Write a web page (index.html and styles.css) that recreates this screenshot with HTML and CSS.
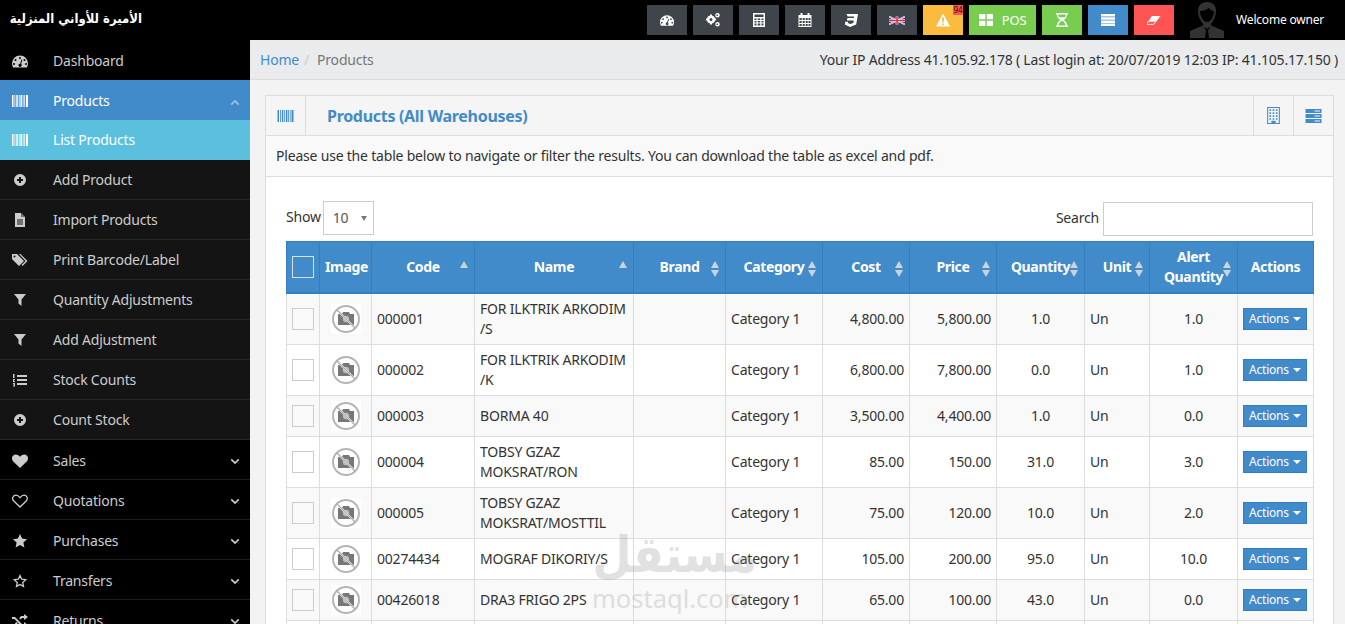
FILE: index.html
```html
<!DOCTYPE html>
<html lang="en">
<head>
<meta charset="utf-8">
<title>Products</title>
<link rel="stylesheet" href="styles.css">
</head>
<body>
<svg class="sprite" xmlns="http://www.w3.org/2000/svg">
  <symbol id="i-barcode" viewBox="0 0 16 14"><path d="M0 1h1.500v12H0zM2.500 1h.8v12h-.8zM4.300 1h1.500v12H4.300zM6.800 1h.8v12h-.8zM8.400 1h1.500v12H8.400zM10.700 1h.8v12h-.8zM12.300 1h.8v12h-.8zM14 1h2v12h-2z"/></symbol>
  <symbol id="i-dash" viewBox="0 0 16 14"><path fill-rule="evenodd" d="M8 1.500A8 8 0 0 0 0 9.500c0 1.500.4 2.800 1.100 4h13.800c.7-1.200 1.100-2.500 1.100-4a8 8 0 0 0-8-8zM8 3a1 1 0 1 1 0 2 1 1 0 0 1 0-2zM3.500 5a1 1 0 1 1 0 2 1 1 0 0 1 0-2zM12.500 5a1 1 0 1 1 0 2 1 1 0 0 1 0-2zM2 9a1 1 0 1 1 0 2 1 1 0 0 1 0-2zM14 9a1 1 0 1 1 0 2 1 1 0 0 1 0-2zM9.500 5.500l.9.3-1.300 4.200a1.600 1.600 0 1 1-.9-.3z"/></symbol>
  <symbol id="i-plus" viewBox="0 0 14 14"><path fill-rule="evenodd" d="M7 1a6 6 0 1 1 0 12A6 6 0 0 1 7 1zM6 4v2H4v2h2v2h2V8h2V6H8V4z"/></symbol>
  <symbol id="i-file" viewBox="1 0 12 14"><path fill-rule="evenodd" d="M2 0h6l4 4v10H2zM4 6.500v1h6v-1zM4 8.500v1h6v-1zM4 10.500v1h6v-1z"/><path fill="#141414" d="M8 0v4h4z" opacity=".5"/></symbol>
  <symbol id="i-tags" viewBox="0 0 16 14"><path fill-rule="evenodd" d="M0 1h5l7 7-5 5-7-7zM2.500 2.500a1 1 0 1 0 0 2 1 1 0 0 0 0-2z"/><path d="M7 1h1.500l7 7-5 5-1-1 4-4z"/></symbol>
  <symbol id="i-filter" viewBox="0 0 12 14"><path d="M0 1h12L7.500 6.500V13l-3-2.500v-4z"/></symbol>
  <symbol id="i-listol" viewBox="0 0 14 14"><path d="M4 2h10v2H4zM4 6h10v2H4zM4 10h10v2H4zM0 1h1.500v4H0zM0 6h2v1H1v1h1v1H0zM0 10h2v3.500H0v-1h1v-.5H0v-.5h1V11H0z"/></symbol>
  <symbol id="i-heart" viewBox="0 0 16 14"><path d="M8 14 1.300 7.500C-.5 5.700-.4 3 1.200 1.500 3 0 5.800.2 8 2.700 10.200.2 13 0 14.800 1.500c1.600 1.500 1.700 4.200-.1 6z"/></symbol>
  <symbol id="i-hearto" viewBox="0 0 16 14"><path fill="none" stroke="currentColor" stroke-width="1.300" d="M8 13 1.800 7C.3 5.500.4 3.400 1.700 2.100 3.200.9 5.800 1 8 3.600 10.200 1 12.800.9 14.300 2.100c1.300 1.300 1.400 3.400-.1 4.900z"/></symbol>
  <symbol id="i-star" viewBox="0 0 14 14"><path d="m7 0 2.100 4.600 4.900.6-3.600 3.300 1 4.900L7 11l-4.400 2.400 1-4.900L0 5.200l4.900-.6z"/></symbol>
  <symbol id="i-staro" viewBox="0 0 14 14"><path fill="none" stroke="currentColor" stroke-width="1.300" d="m7 1.500 1.700 3.700 4 .5-3 2.700.8 4L7 10.500l-3.500 1.900.8-4-3-2.700 4-.5z"/></symbol>
  <symbol id="i-random" viewBox="0 0 16 14"><path d="M0 3h3l7 7h2V8l4 3-4 3v-2H9L2.500 5H0zM0 10h2.500l2-2 1.300 1.300L3 12H0zM9 2h3V0l4 3-4 3V4h-2L8.500 5.500 7.200 4.200z"/></symbol>
  <symbol id="i-down" viewBox="0 0 12 8"><path fill="none" stroke="currentColor" stroke-width="2" d="m1.500 1.500 4.500 4.500 4.500-4.500"/></symbol>
  <symbol id="i-up" viewBox="0 0 12 8"><path fill="none" stroke="currentColor" stroke-width="2" d="m1.500 6.500 4.500-4.500 4.500 4.500"/></symbol>
  <symbol id="i-cogs" viewBox="0 0 14 14"><path fill-rule="evenodd" d="M5 2.500a4 4 0 1 1 0 8 4 4 0 0 1 0-8zM5 5a1.500 1.500 0 1 0 0 3 1.500 1.500 0 0 0 0-3z"/><path d="M4 1.500h2v2H4zM4 9.500h2v2H4zM0 5.500h2v2H0zM8 5.500h2v2H8z"/><path fill-rule="evenodd" d="M11.500 0a2.200 2.200 0 1 1 0 4.500 2.200 2.200 0 0 1 0-4.500zM11.500 1.500a.8.8 0 1 0 0 1.500.8.8 0 0 0 0-1.500zM11.500 9a2.200 2.200 0 1 1 0 4.500 2.200 2.200 0 0 1 0-4.500zM11.500 10.500a.8.8 0 1 0 0 1.500.8.8 0 0 0 0-1.500z"/></symbol>
  <symbol id="i-calc" viewBox="0 0 12 14"><path fill-rule="evenodd" d="M0 0h12v14H0zM1.500 1.500v2.500h9V1.500zM1.500 5.500v1.500h2V5.500zM4.700 5.500v1.500h2.600V5.500zM8.500 5.500v1.500h2V5.500zM1.500 8v1.500h2V8zM4.700 8v1.500h2.600V8zM8.500 8v1.500h2V8zM1.500 10.500V12.500h2V10.500zM4.700 10.500V12.500h2.600V10.500zM8.500 10.500V12.500h2V10.500z"/></symbol>
  <symbol id="i-cal" viewBox="0 0 13 14"><path fill-rule="evenodd" d="M0 2h2V0h2v2h5V0h2v2h2v12H0zM1 5v2h2.200V5zM4.200 5v2h2V5zM7.200 5v2h2V5zM10 5v2h2V5zM1 8v2h2.200V8zM4.200 8v2h2V8zM7.200 8v2h2V8zM10 8v2h2V8zM1 11v2h2.200v-2zM4.200 11v2h2v-2zM7.200 11v2h2v-2zM10 11v2h2v-2z"/></symbol>
  <symbol id="i-css" viewBox="0 0 14 14"><path d="M2.500 1H14l-1.800 10.500L6 14 .8 11.500l.5-2.700h2.800l-.3 1.300 2.500 1 3-1 .5-2.500H2.900l.5-2.700h6.400l.3-1.400H3.700z"/></symbol>
  <symbol id="i-warn" viewBox="0 0 14 13"><path fill-rule="evenodd" d="M7 0l7 13H0zM6 4l.3 5h1.400L8 4zM6.200 10v1.700h1.600V10z"/></symbol>
  <symbol id="i-th" viewBox="0 0 14 12"><path d="M0 0h6.300v5.300H0zM7.700 0H14v5.300H7.700zM0 6.700h6.300V12H0zM7.700 6.700H14V12H7.700z"/></symbol>
  <symbol id="i-hour" viewBox="0 0 12 14"><path fill-rule="evenodd" d="M0 0h12v1.500h-1c0 2.700-1.500 4.300-3.200 5.500C9.500 8.200 11 9.800 11 12.500h1V14H0v-1.500h1C1 9.800 2.500 8.200 4.200 7 2.500 5.800 1 4.200 1 1.500H0zM2.200 1.500c0 1.200.3 2 .7 2.700h6.200c.4-.7.7-1.500.7-2.700zM6 7.800c-1.700 1-3.500 2.500-3.800 4.700h7.600C9.500 10.300 7.700 8.800 6 7.800z"/></symbol>
  <symbol id="i-list" viewBox="0 0 14 12"><path d="M0 0h14v2.500H0zM0 3.200h14v2.500H0zM0 6.400h14v2.500H0zM0 9.600h14V12H0z"/></symbol>
  <symbol id="i-eraser" viewBox="0 0 16 12"><path d="M5.500 1.500H15.500L11 7H2z"/><path fill="none" stroke="currentColor" stroke-width="1" d="M1.500 7.500h9l-3 3.500h-8z"/></symbol>
  <symbol id="i-build" viewBox="0 0 12 16"><path fill-rule="evenodd" d="M0 0h12v16H0zM1 1v14h3v-2h4v2h3V1zM2.200 2.200h1.500v1.500H2.200zM5.200 2.200h1.500v1.500H5.200zM8.200 2.200h1.500v1.500H8.200zM2.200 5h1.500v1.500H2.200zM5.200 5h1.500v1.500H5.200zM8.200 5h1.500v1.500H8.200zM2.200 7.800h1.500v1.500H2.200zM5.200 7.800h1.500v1.500H5.200zM8.200 7.800h1.500v1.500H8.200zM2.200 10.500h1.500V12H2.200zM5.200 10.500h1.500V12H5.200zM8.200 10.500h1.500V12H8.200z"/></symbol>
  <symbol id="i-server" viewBox="0 0 16 14"><path fill-rule="evenodd" d="M0 0h16v4H0zM9 1.500v1h5.500v-1zM0 5h16v4H0zM9 6.500v1h5.500v-1zM0 10h16v4H0zM9 11.500v1h5.500v-1z"/></symbol>
  <symbol id="i-noimg" viewBox="0 0 30 30"><rect width="30" height="30" fill="#fff"/><circle cx="15" cy="15" r="13" fill="none" stroke="#b5b5b5" stroke-width="2"/><path fill="#777" d="M7 10h4l1-2h6l1 2h4v11H7z"/><circle cx="15" cy="15" r="3.200" fill="#bbb"/><path stroke="#fff" stroke-width="2" d="m7 7 16 16"/><path stroke="#aaa" stroke-width="1.200" d="m6 6 18 18"/></symbol>
</svg>

<header class="topbar">
  <div class="brand" dir="rtl">الأميرة للأواني المنزلية</div>
  <nav class="tools">
    <a class="tool tool-dark"><svg class="ti"><use href="#i-dash"/></svg></a>
    <a class="tool tool-dark"><svg class="ti"><use href="#i-cogs"/></svg></a>
    <a class="tool tool-dark"><svg class="ti"><use href="#i-calc"/></svg></a>
    <a class="tool tool-dark"><svg class="ti"><use href="#i-cal"/></svg></a>
    <a class="tool tool-dark"><svg class="ti"><use href="#i-css"/></svg></a>
    <a class="tool tool-dark">
      <svg class="flag" viewBox="0 0 60 30"><rect width="60" height="30" fill="#2b3f8c"/><path stroke="#fff" stroke-width="6" d="m0 0 60 30M60 0 0 30"/><path stroke="#d8333f" stroke-width="2" d="m0 0 60 30M60 0 0 30"/><path stroke="#fff" stroke-width="10" d="M30 0v30M0 15h60"/><path stroke="#d8333f" stroke-width="6" d="M30 0v30M0 15h60"/></svg>
    </a>
    <a class="tool tool-amber"><svg class="ti"><use href="#i-warn"/></svg><span class="badge">94</span></a>
    <a class="tool tool-green tool-pos"><svg class="ti"><use href="#i-th"/></svg><span>POS</span></a>
    <a class="tool tool-green"><svg class="ti"><use href="#i-hour"/></svg></a>
    <a class="tool tool-blue"><svg class="ti"><use href="#i-list"/></svg></a>
    <a class="tool tool-red"><svg class="ti"><use href="#i-eraser"/></svg></a>
  </nav>
  <div class="user">
    <svg class="avatar" viewBox="0 0 34 36"><path fill="#333" d="M17 0c6 0 9 3.500 9 9 0 5-2.500 10-5 12.500v2L34 29v7H0v-7l13-5.500v-2C10.500 19 8 14 8 9c0-5.500 3-9 9-9z"/><path fill="#000" d="M10 9c3 0 6-1 9-3 1.500 2 3 3 5 3 0 5-3 11-7 11s-7-6-7-11zM14.500 25l2.500 2 2.500-2 .5 1-2 2 1 8h-4l1-8-2-2z"/></svg>
    <span>Welcome owner</span>
  </div>
</header>

<div class="shell">
  <aside class="sidebar">
    <a class="nav nav-home"><svg class="ni"><use href="#i-dash"/></svg><span>Dashboard</span></a>
    <a class="nav nav-open"><svg class="ni"><use href="#i-barcode"/></svg><span>Products</span><svg class="chev"><use href="#i-up"/></svg></a>
    <a class="nav nav-current"><svg class="ni"><use href="#i-barcode"/></svg><span>List Products</span></a>
    <a class="nav nav-sub"><svg class="ni"><use href="#i-plus"/></svg><span>Add Product</span></a>
    <a class="nav nav-sub"><svg class="ni"><use href="#i-file"/></svg><span>Import Products</span></a>
    <a class="nav nav-sub"><svg class="ni"><use href="#i-tags"/></svg><span>Print Barcode/Label</span></a>
    <a class="nav nav-sub"><svg class="ni"><use href="#i-filter"/></svg><span>Quantity Adjustments</span></a>
    <a class="nav nav-sub"><svg class="ni"><use href="#i-filter"/></svg><span>Add Adjustment</span></a>
    <a class="nav nav-sub"><svg class="ni"><use href="#i-listol"/></svg><span>Stock Counts</span></a>
    <a class="nav nav-sub"><svg class="ni"><use href="#i-plus"/></svg><span>Count Stock</span></a>
    <a class="nav"><svg class="ni"><use href="#i-heart"/></svg><span>Sales</span><svg class="chev"><use href="#i-down"/></svg></a>
    <a class="nav"><svg class="ni"><use href="#i-hearto"/></svg><span>Quotations</span><svg class="chev"><use href="#i-down"/></svg></a>
    <a class="nav"><svg class="ni"><use href="#i-star"/></svg><span>Purchases</span><svg class="chev"><use href="#i-down"/></svg></a>
    <a class="nav"><svg class="ni"><use href="#i-staro"/></svg><span>Transfers</span><svg class="chev"><use href="#i-down"/></svg></a>
    <a class="nav"><svg class="ni"><use href="#i-random"/></svg><span>Returns</span><svg class="chev"><use href="#i-down"/></svg></a>
  </aside>

  <main class="content">
    <div class="crumbs">
      <div class="crumb-path"><a class="crumb-link">Home</a><span class="crumb-sep">/</span><span class="crumb-here">Products</span></div>
      <div class="crumb-info">Your IP Address 41.105.92.178 ( Last login at: 20/07/2019 12:03 IP: 41.105.17.150 )</div>
    </div>

    <section class="box">
      <div class="box-head">
        <div class="head-icon"><svg class="hi"><use href="#i-barcode"/></svg></div>
        <h2 class="box-title">Products (All Warehouses)</h2>
        <div class="head-btn"><svg class="hi-build"><use href="#i-build"/></svg></div>
        <div class="head-btn"><svg class="hi"><use href="#i-server"/></svg></div>
      </div>
      <p class="box-intro">Please use the table below to navigate or filter the results. You can download the table as excel and pdf.</p>
      <div class="box-body">
        <div class="controls">
          <label class="show">Show <span class="select">10<i class="caret"></i></span></label>
          <label class="search">Search <span class="input"></span></label>
        </div>
        <table class="grid">
          <colgroup>
            <col class="c-check"><col class="c-image"><col class="c-code"><col class="c-name"><col class="c-brand"><col class="c-cat"><col class="c-cost"><col class="c-price"><col class="c-qty"><col class="c-unit"><col class="c-alert"><col class="c-act">
          </colgroup>
          <thead>
            <tr>
              <th><span class="check check-head"></span></th>
              <th>Image</th>
              <th class="sort-up">Code</th>
              <th class="sort-up">Name</th>
              <th class="sort">Brand</th>
              <th class="sort">Category</th>
              <th class="sort">Cost</th>
              <th class="sort">Price</th>
              <th class="sort">Quantity</th>
              <th class="sort">Unit</th>
              <th class="sort">Alert Quantity</th>
              <th>Actions</th>
            </tr>
          </thead>
          <tbody>
            <tr>
              <td class="mid"><span class="check"></span></td>
              <td class="mid"><svg class="noimg"><use href="#i-noimg"/></svg></td>
              <td>000001</td><td>FOR ILKTRIK ARKODIM /S</td><td></td><td>Category 1</td>
              <td class="num">4,800.00</td><td class="num">5,800.00</td><td class="mid">1.0</td><td>Un</td><td class="mid">1.0</td>
              <td class="mid"><a class="act">Actions<i class="act-caret"></i></a></td>
            </tr>
            <tr>
              <td class="mid"><span class="check"></span></td>
              <td class="mid"><svg class="noimg"><use href="#i-noimg"/></svg></td>
              <td>000002</td><td>FOR ILKTRIK ARKODIM /K</td><td></td><td>Category 1</td>
              <td class="num">6,800.00</td><td class="num">7,800.00</td><td class="mid">0.0</td><td>Un</td><td class="mid">1.0</td>
              <td class="mid"><a class="act">Actions<i class="act-caret"></i></a></td>
            </tr>
            <tr>
              <td class="mid"><span class="check"></span></td>
              <td class="mid"><svg class="noimg"><use href="#i-noimg"/></svg></td>
              <td>000003</td><td>BORMA 40</td><td></td><td>Category 1</td>
              <td class="num">3,500.00</td><td class="num">4,400.00</td><td class="mid">1.0</td><td>Un</td><td class="mid">0.0</td>
              <td class="mid"><a class="act">Actions<i class="act-caret"></i></a></td>
            </tr>
            <tr>
              <td class="mid"><span class="check"></span></td>
              <td class="mid"><svg class="noimg"><use href="#i-noimg"/></svg></td>
              <td>000004</td><td>TOBSY GZAZ MOKSRAT/RON</td><td></td><td>Category 1</td>
              <td class="num">85.00</td><td class="num">150.00</td><td class="mid">31.0</td><td>Un</td><td class="mid">3.0</td>
              <td class="mid"><a class="act">Actions<i class="act-caret"></i></a></td>
            </tr>
            <tr>
              <td class="mid"><span class="check"></span></td>
              <td class="mid"><svg class="noimg"><use href="#i-noimg"/></svg></td>
              <td>000005</td><td>TOBSY GZAZ MOKSRAT/MOSTTIL</td><td></td><td>Category 1</td>
              <td class="num">75.00</td><td class="num">120.00</td><td class="mid">10.0</td><td>Un</td><td class="mid">2.0</td>
              <td class="mid"><a class="act">Actions<i class="act-caret"></i></a></td>
            </tr>
            <tr>
              <td class="mid"><span class="check"></span></td>
              <td class="mid"><svg class="noimg"><use href="#i-noimg"/></svg></td>
              <td>00274434</td><td>MOGRAF DIKORIY/S</td><td></td><td>Category 1</td>
              <td class="num">105.00</td><td class="num">200.00</td><td class="mid">95.0</td><td>Un</td><td class="mid">10.0</td>
              <td class="mid"><a class="act">Actions<i class="act-caret"></i></a></td>
            </tr>
            <tr>
              <td class="mid"><span class="check"></span></td>
              <td class="mid"><svg class="noimg"><use href="#i-noimg"/></svg></td>
              <td>00426018</td><td>DRA3 FRIGO 2PS</td><td></td><td>Category 1</td>
              <td class="num">65.00</td><td class="num">100.00</td><td class="mid">43.0</td><td>Un</td><td class="mid">0.0</td>
              <td class="mid"><a class="act">Actions<i class="act-caret"></i></a></td>
            </tr>
            <tr class="row-cut">
              <td></td><td></td><td></td><td></td><td></td><td></td><td></td><td></td><td></td><td></td><td></td><td></td>
            </tr>
          </tbody>
        </table>
      </div>
    </section>
  </main>
</div>

<div class="watermark" aria-hidden="true">
  <div class="wm-ar" dir="rtl">مستقل</div>
  <div class="wm-en">mostaql.com</div>
</div>
</body>
</html>
```

FILE: styles.css
```css
* { box-sizing: border-box; }
html, body { height: 100%; margin: 0; overflow: hidden; }
body {
  font-family: "Noto Sans", "Open Sans", sans-serif;
  font-size: 14px;
  line-height: 20px;
  letter-spacing: -.2px;
  color: #333;
  background: #f3f3f3;
}
.sprite { display: none; }

/* top bar */
.topbar { display: flex; align-items: center; height: 40px; background: #000; color: #fff; }
.brand { flex: 0 0 250px; padding: 0 108px 4px 0; font: bold 13px "DejaVu Sans Condensed", "DejaVu Sans", sans-serif; letter-spacing: 0; white-space: nowrap; color: #fff; }
.tools { display: flex; gap: 6px; margin-left: auto; }
.tool { position: relative; display: flex; align-items: center; justify-content: center; gap: 9px; width: 40px; height: 30px; color: #fff; font-size: 13px; }
.tool-dark { background: #3f454a; }
.tool-amber { background: #fbbb3e; }
.tool-green { background: #78cd51; }
.tool-blue { background: #428bca; }
.tool-red { background: #ff5454; }
.tool-pos { width: 67px; }
.ti { width: 14px; height: 14px; fill: currentColor; }
.flag { width: 16px; height: 11px; }
.badge { position: absolute; top: 0; right: 0; width: 10px; height: 10px; background: #ff5454; color: #111; font-size: 8px; line-height: 9px; letter-spacing: 0; text-align: center; }
.user { display: flex; align-items: center; gap: 12px; margin: 0 21px 0 16px; font-size: 12px; white-space: nowrap; }
.avatar { width: 34px; height: 36px; }

/* layout */
.shell { display: flex; height: 584px; overflow: hidden; }
.sidebar { flex: 0 0 250px; background: #000; overflow: hidden; }
.content { flex: 1; min-width: 0; overflow: hidden; }

/* sidebar */
.nav { display: flex; align-items: center; height: 40px; padding: 2px 10px 0 12px; border-bottom: 1px solid #1c1c1c; color: #ccc; font-size: 14px; }
.nav span { margin-left: 25px; flex: 1; }
.ni { flex: 0 0 16px; width: 16px; height: 14px; fill: currentColor; }
.chev { width: 10px; height: 7px; margin-top: 2px; color: #ccc; }
.nav-home { border-bottom: 0; }
.nav-open { background: #428bca; color: #fff; border-bottom: 0; }
.nav-open .chev { color: #9fc3e4; }
.nav-current { padding-top: 0; background: #5bc0de; color: #fff; border-bottom: 0; }
.nav-sub { padding-top: 0; background: #141414; border-bottom-color: #262626; }

/* breadcrumb */
.crumbs { display: flex; justify-content: space-between; align-items: center; height: 40px; padding: 0 7px 0 10px; background: #e9ebed; border-bottom: 1px solid #dcdcdc; }
.crumb-link { color: #428bca; }
.crumb-sep { margin: 0 8px 0 5px; color: #ccc; }
.crumb-here { color: #777; }

/* box */
.box { margin: 15px 11px 0 15px; border: 1px solid #ddd; background: #fff; }
.box-head { display: flex; align-items: stretch; height: 40px; background: #f5f5f5; border-bottom: 1px solid #ddd; }
.head-icon { display: flex; align-items: center; justify-content: center; width: 40px; border-right: 1px solid #ddd; }
.hi { width: 17px; height: 14px; fill: #428bca; }
.hi-build { width: 13px; height: 17px; fill: #428bca; }
.box-title { flex: 1; margin: 0; padding-left: 21px; font-size: 16px; line-height: 40px; font-weight: 700; letter-spacing: -.3px; color: #428bca; }
.head-btn { display: flex; align-items: center; justify-content: center; width: 40px; border-left: 1px solid #ddd; }
.box-intro { margin: 0; height: 41px; padding: 0 10px; line-height: 40px; background: #f9f9f9; border-bottom: 1px solid #ddd; }
.box-body { padding: 24px 20px 0; }

/* controls */
.controls { display: flex; justify-content: space-between; align-items: flex-start; height: 40px; }
.show, .search { display: flex; align-items: flex-start; gap: 2px; line-height: 32px; }
.search { margin-top: 1px; gap: 4px; }
.select { display: flex; align-items: center; justify-content: space-between; width: 51px; height: 34px; padding: 0 6px 0 9px; border: 1px solid #ccc; background: #fff; color: #555; }
.caret { width: 0; height: 0; border: 3px solid transparent; border-top: 5px solid #777; border-bottom: 0; }
.input { width: 210px; height: 34px; border: 1px solid #ccc; background: #fff; }

/* table */
.grid { width: 1027px; table-layout: fixed; border-collapse: collapse; }
.c-check { width: 33px; } .c-image { width: 52px; } .c-code { width: 103px; } .c-name { width: 159px; }
.c-brand { width: 92px; } .c-cat { width: 97px; } .c-cost { width: 87px; } .c-price { width: 87px; }
.c-qty { width: 88px; } .c-unit { width: 65px; } .c-alert { width: 88px; } .c-act { width: 76px; }
.grid th { position: relative; height: 51px; padding: 5px; background: #428bca; border: 1px solid #357ebd; border-bottom-width: 2px; color: #fff; font-weight: 700; letter-spacing: -.35px; text-align: center; }
.grid td { padding: 5px; border: 1px solid #ddd; vertical-align: middle; background: #fff; }
.grid tbody tr:nth-child(odd) td { background: #f9f9f9; }
.grid td.mid { text-align: center; }
.grid td.num { text-align: right; }
.row-cut td { height: 41px; }
.sort::before, .sort::after, .sort-up::before { content: ""; position: absolute; right: 6px; width: 0; height: 0; border-left: 4px solid transparent; border-right: 4px solid transparent; }
.sort::before, .sort-up::before { top: 19px; border-bottom: 7px solid #c9d3dc; }
.sort::after { top: 28px; border-top: 7px solid #c9d3dc; }
.check { display: block; width: 22px; height: 22px; margin: 0 auto; border: 1px solid #ccc; background: #fff; }
.grid tbody tr:nth-child(odd) .check { background: #f9f9f9; }
.check-head { border-color: #d5e2ee; background: transparent; }
.noimg { display: block; width: 30px; height: 30px; margin: 0 auto; }
.act { display: inline-flex; align-items: center; gap: 4px; width: 64px; height: 22px; margin-right: 1px; padding: 0 5px; border: 1px solid #357ebd; background: #428bca; color: #fff; font-size: 12px; line-height: 20px; white-space: nowrap; }
.act-caret { width: 0; height: 0; border: 4px solid transparent; border-top-color: #fff; border-bottom: 0; }

/* watermark */
.watermark { position: absolute; left: 592px; top: 530px; width: 165px; color: #8c8c8c; opacity: .25; pointer-events: none; letter-spacing: 0; }
.wm-ar { font: bold 50px/50px "DejaVu Sans Condensed", "DejaVu Sans", sans-serif; text-align: right; }
.wm-en { font: 25.5px/36px "Noto Sans", sans-serif; text-align: left; }
```
